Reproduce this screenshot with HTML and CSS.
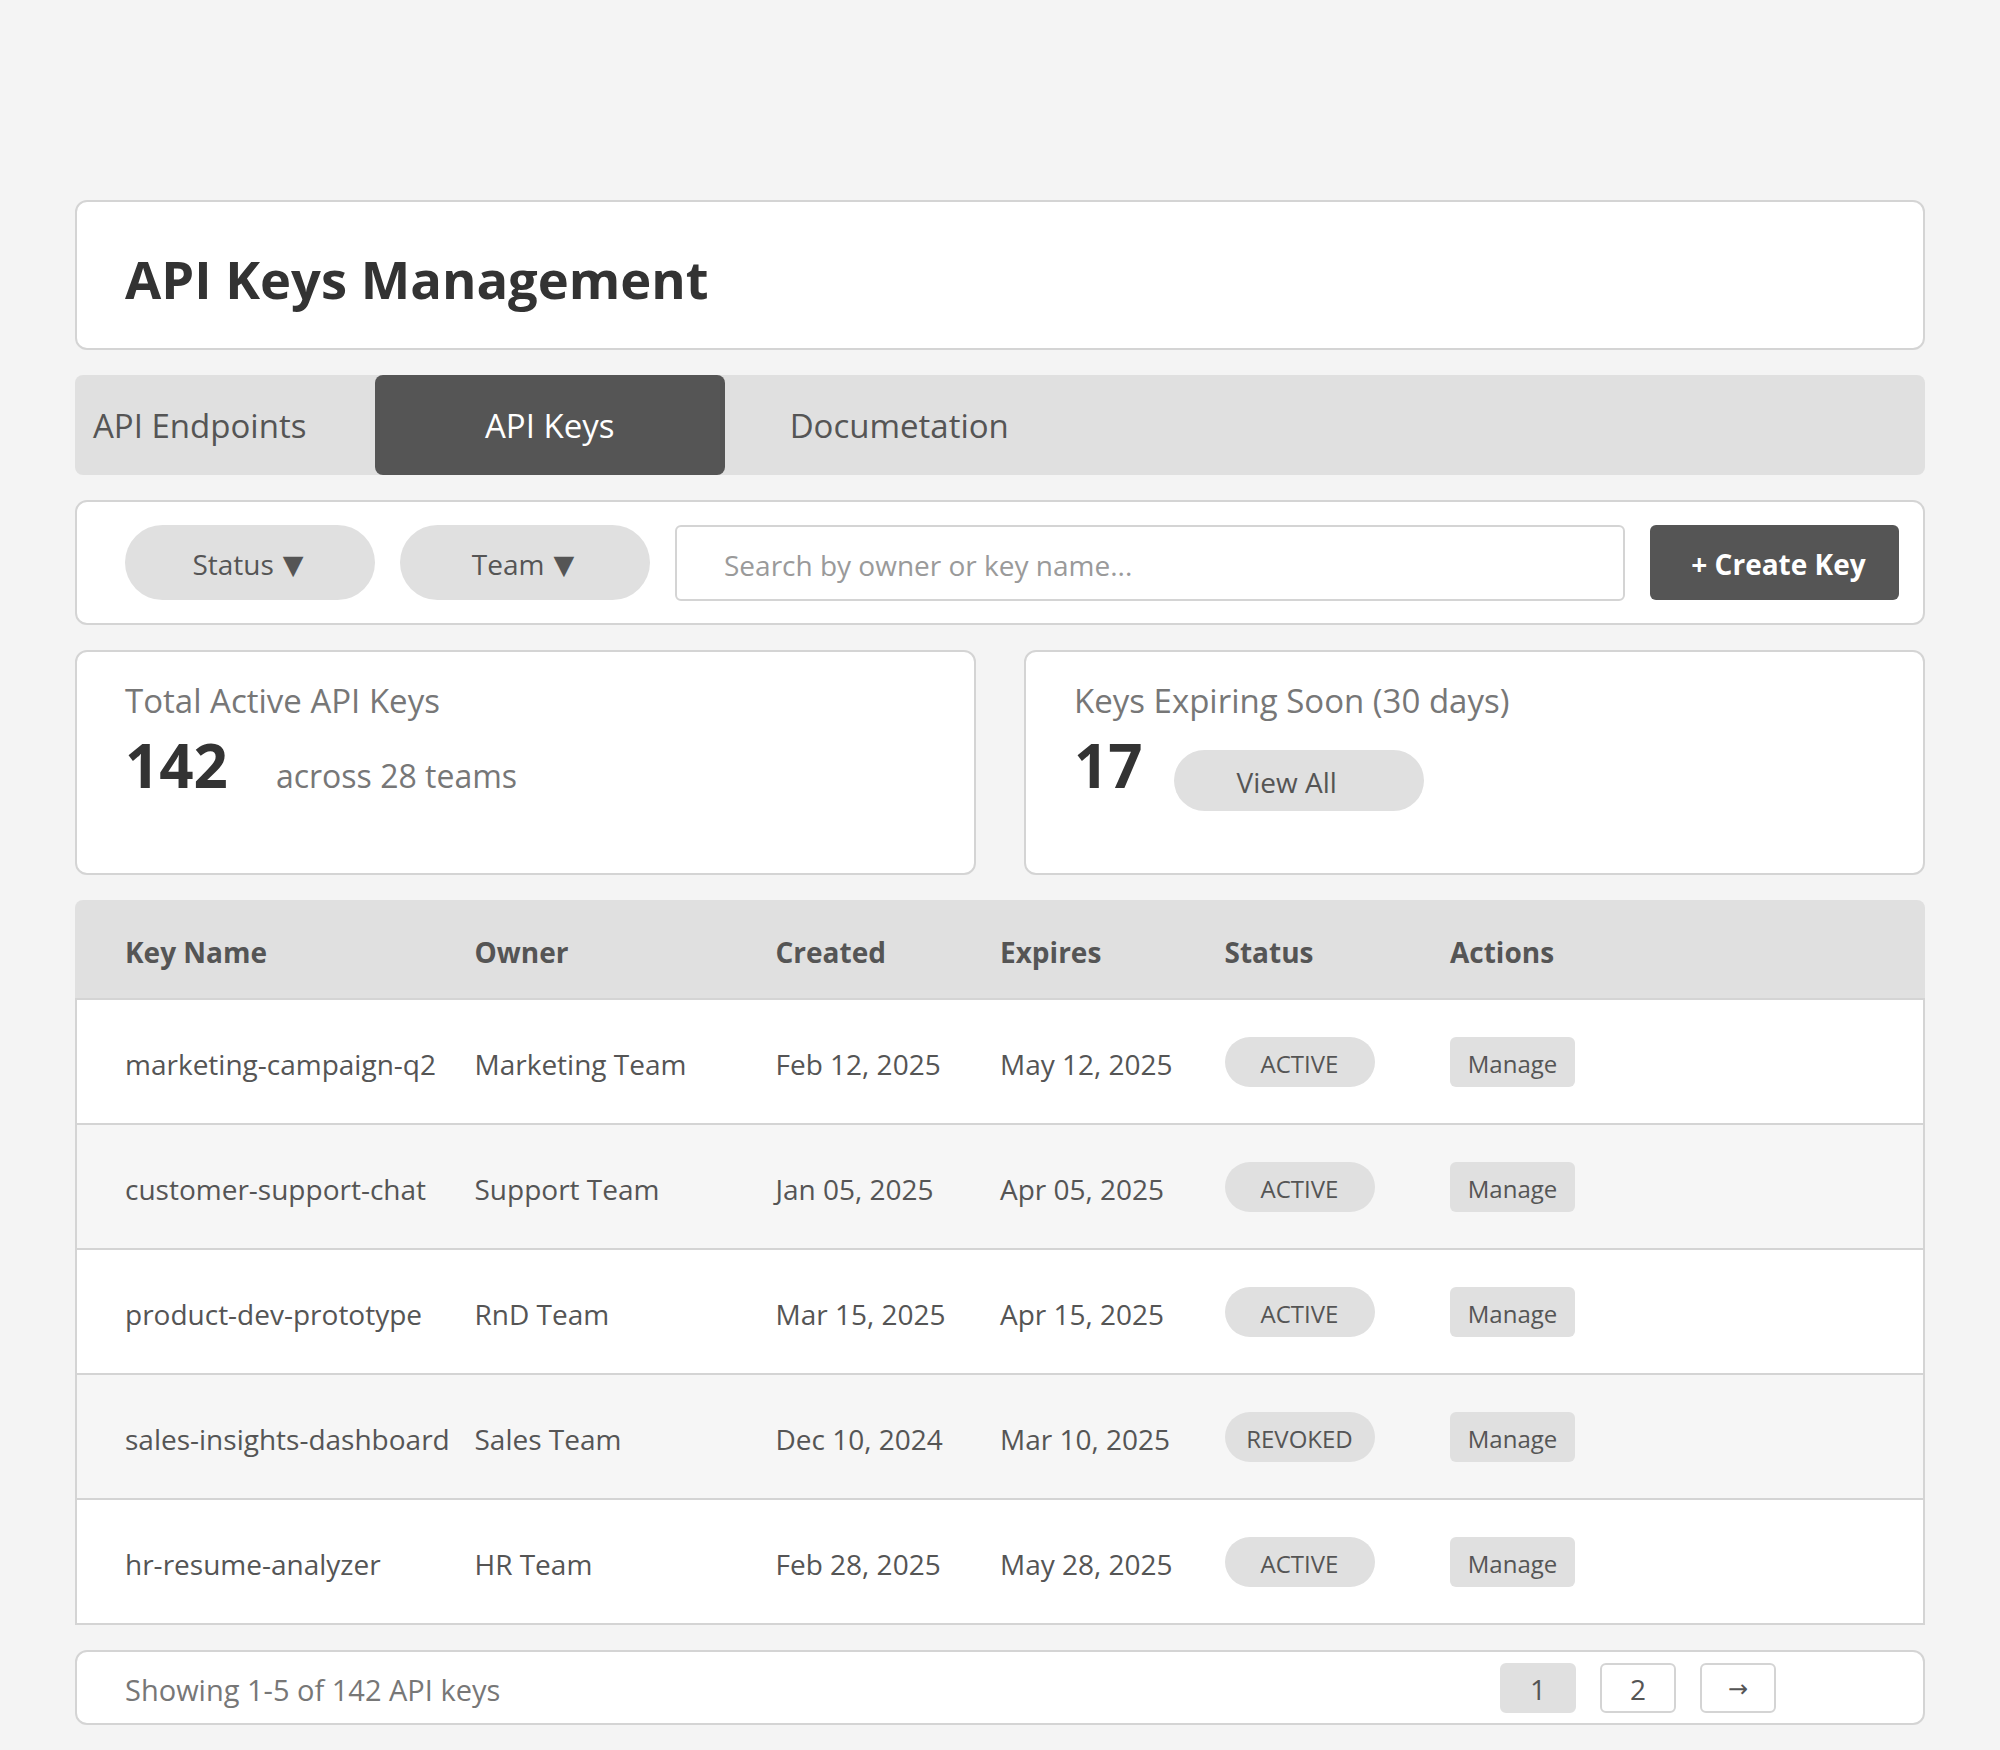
FILE: index.html
```html
<!DOCTYPE html>
<html lang="en">
<head>
<meta charset="utf-8">
<title>API Keys Management</title>
<link rel="stylesheet" href="styles.css">
</head>
<body>
<div class="page">
  <header class="card title-card">
    <h1>API Keys Management</h1>
  </header>

  <nav class="tabs">
    <div class="tab tab-first">API Endpoints</div>
    <div class="tab tab-active">API Keys</div>
    <div class="tab">Documetation</div>
  </nav>

  <div class="card toolbar">
    <div class="pill filter">Status <span class="caret">▼</span></div>
    <div class="pill filter">Team <span class="caret">▼</span></div>
    <input class="search" type="text" placeholder="Search by owner or key name...">
    <button class="create">+ Create Key</button>
  </div>

  <div class="stats">
    <div class="card stat">
      <div class="stat-title">Total Active API Keys</div>
      <div class="stat-row stat-row-baseline">
        <span class="stat-num">142</span>
        <span class="stat-sub">across 28 teams</span>
      </div>
    </div>
    <div class="card stat">
      <div class="stat-title">Keys Expiring Soon (30 days)</div>
      <div class="stat-row">
        <span class="stat-num">17</span>
        <span class="pill view-all">View All</span>
      </div>
    </div>
  </div>

  <div class="table">
    <div class="thead">
      <div class="th">Key Name</div>
      <div class="th">Owner</div>
      <div class="th">Created</div>
      <div class="th">Expires</div>
      <div class="th">Status</div>
      <div class="th">Actions</div>
    </div>
    <div class="tr">
      <div class="td">marketing-campaign-q2</div>
      <div class="td">Marketing Team</div>
      <div class="td">Feb 12, 2025</div>
      <div class="td">May 12, 2025</div>
      <div class="tdc"><span class="badge">ACTIVE</span></div>
      <div class="tdc"><span class="manage">Manage</span></div>
    </div>
    <div class="tr tr-alt">
      <div class="td">customer-support-chat</div>
      <div class="td">Support Team</div>
      <div class="td">Jan 05, 2025</div>
      <div class="td">Apr 05, 2025</div>
      <div class="tdc"><span class="badge">ACTIVE</span></div>
      <div class="tdc"><span class="manage">Manage</span></div>
    </div>
    <div class="tr">
      <div class="td">product-dev-prototype</div>
      <div class="td">RnD Team</div>
      <div class="td">Mar 15, 2025</div>
      <div class="td">Apr 15, 2025</div>
      <div class="tdc"><span class="badge">ACTIVE</span></div>
      <div class="tdc"><span class="manage">Manage</span></div>
    </div>
    <div class="tr tr-alt">
      <div class="td">sales-insights-dashboard</div>
      <div class="td">Sales Team</div>
      <div class="td">Dec 10, 2024</div>
      <div class="td">Mar 10, 2025</div>
      <div class="tdc"><span class="badge">REVOKED</span></div>
      <div class="tdc"><span class="manage">Manage</span></div>
    </div>
    <div class="tr">
      <div class="td">hr-resume-analyzer</div>
      <div class="td">HR Team</div>
      <div class="td">Feb 28, 2025</div>
      <div class="td">May 28, 2025</div>
      <div class="tdc"><span class="badge">ACTIVE</span></div>
      <div class="tdc"><span class="manage">Manage</span></div>
    </div>
  </div>

  <div class="card footer">
    <div class="showing">Showing 1-5 of 142 API keys</div>
    <div class="pager">
      <span class="pg pg-current">1</span>
      <span class="pg">2</span>
      <span class="pg pg-arrow">→</span>
    </div>
  </div>
</div>
</body>
</html>
```

FILE: styles.css
```css
* { box-sizing: border-box; }

body {
  margin: 0;
  background: #f4f4f4;
  font-family: "Open Sans", "Noto Sans", sans-serif;
  color: #555;
}

.page {
  width: 1850px;
  margin: 200px 0 0 75px;
  display: flex;
  flex-direction: column;
  gap: 25px;
}

.card {
  background: #fff;
  border: 2px solid #d4d4d4;
  border-radius: 12px;
}

/* Title */
.title-card {
  height: 150px;
  padding: 8px 48px 0;
  display: flex;
  align-items: center;
}
.title-card h1 {
  margin: 0;
  font-size: 52.5px;
  line-height: 1;
  font-weight: 700;
  color: #333;
}

/* Tabs */
.tabs {
  height: 100px;
  background: #e0e0e0;
  border-radius: 8px;
  display: flex;
}
.tab {
  width: 349.5px;
  display: flex;
  align-items: center;
  justify-content: center;
  font-size: 33px;
  color: #555;
}
.tab-first {
  width: 300px;
  justify-content: flex-start;
  padding-left: 18px;
}
.tab-active {
  background: #555;
  color: #fff;
  border-radius: 8px;
}

/* Toolbar */
.toolbar {
  height: 125px;
  padding: 0 24px 0 48px;
  display: flex;
  align-items: center;
  gap: 25px;
}
.pill {
  background: #e0e0e0;
  border-radius: 40px;
  display: flex;
  align-items: center;
  justify-content: center;
  color: #555;
  font-size: 28px;
}
.filter {
  width: 250px;
  height: 75px;
  padding-top: 3px;
  padding-right: 4px;
}
.caret {
  font-family: "DejaVu Sans", sans-serif;
  font-size: 27px;
  margin-left: 9px;
  color: #555;
}
.search {
  width: 950px;
  height: 76px;
  border: 2px solid #d4d4d4;
  border-radius: 6px;
  padding: 4px 0 0 47px;
  font-family: "Open Sans", "Noto Sans", sans-serif;
  font-size: 28px;
  color: #555;
  background: #fff;
  outline: none;
}
.search::placeholder { color: #9a9a9a; }
.create {
  width: 249px;
  height: 75px;
  border: none;
  border-radius: 6px;
  background: #555;
  color: #fff;
  font-family: "Open Sans", "Noto Sans", sans-serif;
  font-size: 28px;
  font-weight: 700;
  padding: 3px 0 0 8px;
}

/* Stats */
.stats {
  display: grid;
  grid-template-columns: 1fr 1fr;
  gap: 48px;
}
.stat {
  height: 225px;
  padding: 27px 48px 0;
}
.stat-title {
  font-size: 33px;
  line-height: 44px;
  color: #777;
}
.stat-row {
  margin-top: 12px;
  display: flex;
  align-items: flex-start;
}
.stat-row-baseline { align-items: baseline; }
.stat-num {
  font-size: 60px;
  line-height: 1;
  font-weight: 700;
  color: #333;
}
.stat-sub {
  margin-left: 48px;
  font-size: 32px;
  color: #777;
}
.view-all {
  width: 250px;
  height: 61px;
  margin-left: 31px;
  margin-top: 15px;
  padding-top: 3px;
  padding-right: 24px;
  border-radius: 31px;
}

/* Table */
.table {
  display: flex;
  flex-direction: column;
}
.thead, .tr {
  display: grid;
  grid-template-columns: 349.5px 301px 224.5px 224.5px 225.5px 1fr;
  align-items: center;
}
.thead {
  height: 100px;
  background: #e0e0e0;
  border-radius: 8px 8px 0 0;
  border-bottom: 2px solid #d4d4d4;
  padding-left: 50px;
}
.th {
  font-size: 28px;
  font-weight: 700;
  color: #555;
  padding-top: 5px;
}
.tr {
  height: 125px;
  background: #fff;
  border: 2px solid #d4d4d4;
  border-top: none;
  padding-left: 48px;
}
.tr-alt { background: #f6f6f6; }
.td {
  font-size: 28px;
  color: #555;
  padding-top: 4px;
  white-space: nowrap;
}
.tdc { display: flex; }
.badge {
  width: 150px;
  height: 50px;
  border-radius: 25px;
  background: #e0e0e0;
  display: flex;
  align-items: center;
  justify-content: center;
  font-size: 24px;
  color: #555;
  padding-top: 4px;
}
.manage {
  width: 125px;
  height: 50px;
  border-radius: 6px;
  background: #e0e0e0;
  display: flex;
  align-items: center;
  justify-content: center;
  font-size: 24px;
  color: #555;
  padding-top: 4px;
}

/* Footer */
.footer {
  height: 75px;
  padding: 0 147px 0 48px;
  display: flex;
  align-items: center;
  justify-content: space-between;
}
.showing {
  font-size: 29px;
  color: #777;
  padding-top: 3px;
}
.pager {
  display: flex;
  gap: 24px;
}
.pg {
  width: 76px;
  height: 50px;
  border: 2px solid #d4d4d4;
  border-radius: 6px;
  display: flex;
  align-items: center;
  justify-content: center;
  font-size: 28px;
  color: #555;
  background: #fff;
  padding-top: 2px;
}
.pg-current {
  background: #e0e0e0;
  border-color: #e0e0e0;
}
.pg-arrow {
  font-family: "DejaVu Sans", sans-serif;
  font-size: 24px;
}
```
